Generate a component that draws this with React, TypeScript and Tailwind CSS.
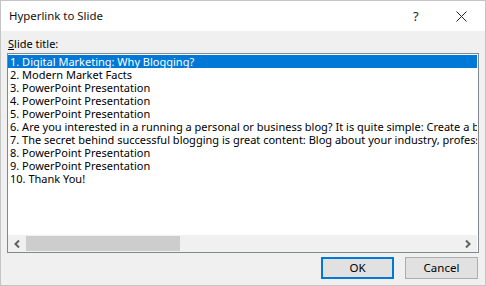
import React from "react";

const items = [
  "1. Digital Marketing: Why Blogging?",
  "2. Modern Market Facts",
  "3. PowerPoint Presentation",
  "4. PowerPoint Presentation",
  "5. PowerPoint Presentation",
  "6. Are you interested in a running a personal or business blog? It is quite simple: Create a blog in minutes",
  "7. The secret behind successful blogging is great content: Blog about your industry, profession and passions",
  "8. PowerPoint Presentation",
  "9. PowerPoint Presentation",
  "10. Thank You!",
];

export default function App() {
  return (
    <div
      className="w-[486px] h-[286px] border border-[#c4c4c4] bg-[#f0f0f0] flex flex-col text-[11px] text-black"
      style={{ fontFamily: '"Noto Sans", "Open Sans", sans-serif' }}
    >
      <div className="h-[30px] bg-white flex items-center pl-[8px] pr-[18px]">
        <span className="flex-1 text-[11.4px] text-[#111]">Hyperlink to Slide</span>
        <span className="w-[10px] mr-[33px] text-[13px] text-[#222] leading-none">?</span>
        <svg width="11" height="11" viewBox="0 0 11 11">
          <path d="M0.5 0.5 L10.5 10.5 M10.5 0.5 L0.5 10.5" stroke="#222" strokeWidth="1" />
        </svg>
      </div>
      <div className="flex-1 flex flex-col px-[6px]">
        <div className="pt-[5px] h-[22px] leading-[15px] pl-[1px]">
          <span className="underline">S</span>lide title:
        </div>
        <div className="h-[200px] border border-[#828790] bg-white flex flex-col pt-[1px] pr-[1px]">
          <div className="flex-1 overflow-hidden">
            {items.map((t, i) => (
              <div
                key={i}
                className={
                  "h-[13px] leading-[13px] pl-[2px] whitespace-nowrap " +
                  (i === 0 ? "bg-[#0078d7] text-white" : "")
                }
              >
                {t}
              </div>
            ))}
          </div>
          <div className="h-[17px] bg-[#f0f0f0] flex items-center">
            <div className="w-[18px] flex justify-center">
              <svg width="6" height="8" viewBox="0 0 6 8">
                <path d="M5 0.5 L1.5 4 L5 7.5" stroke="#606060" strokeWidth="2" fill="none" />
              </svg>
            </div>
            <div className="w-[154px] h-[15px] bg-[#cdcdcd]" />
            <div className="flex-1" />
            <div className="w-[18px] flex justify-center">
              <svg width="6" height="8" viewBox="0 0 6 8">
                <path d="M1 0.5 L4.5 4 L1 7.5" stroke="#606060" strokeWidth="2" fill="none" />
              </svg>
            </div>
          </div>
        </div>
        <div className="flex justify-end gap-[11px] pt-[4px] pr-[1px]">
          <button className="w-[73px] h-[22px] border-2 border-[#0078d7] bg-[#e1e1e1] text-[11.5px] leading-none">
            OK
          </button>
          <button className="w-[73px] h-[22px] border border-[#adadad] bg-[#e1e1e1] text-[11.5px] leading-none">
            Cancel
          </button>
        </div>
      </div>
    </div>
  );
}
